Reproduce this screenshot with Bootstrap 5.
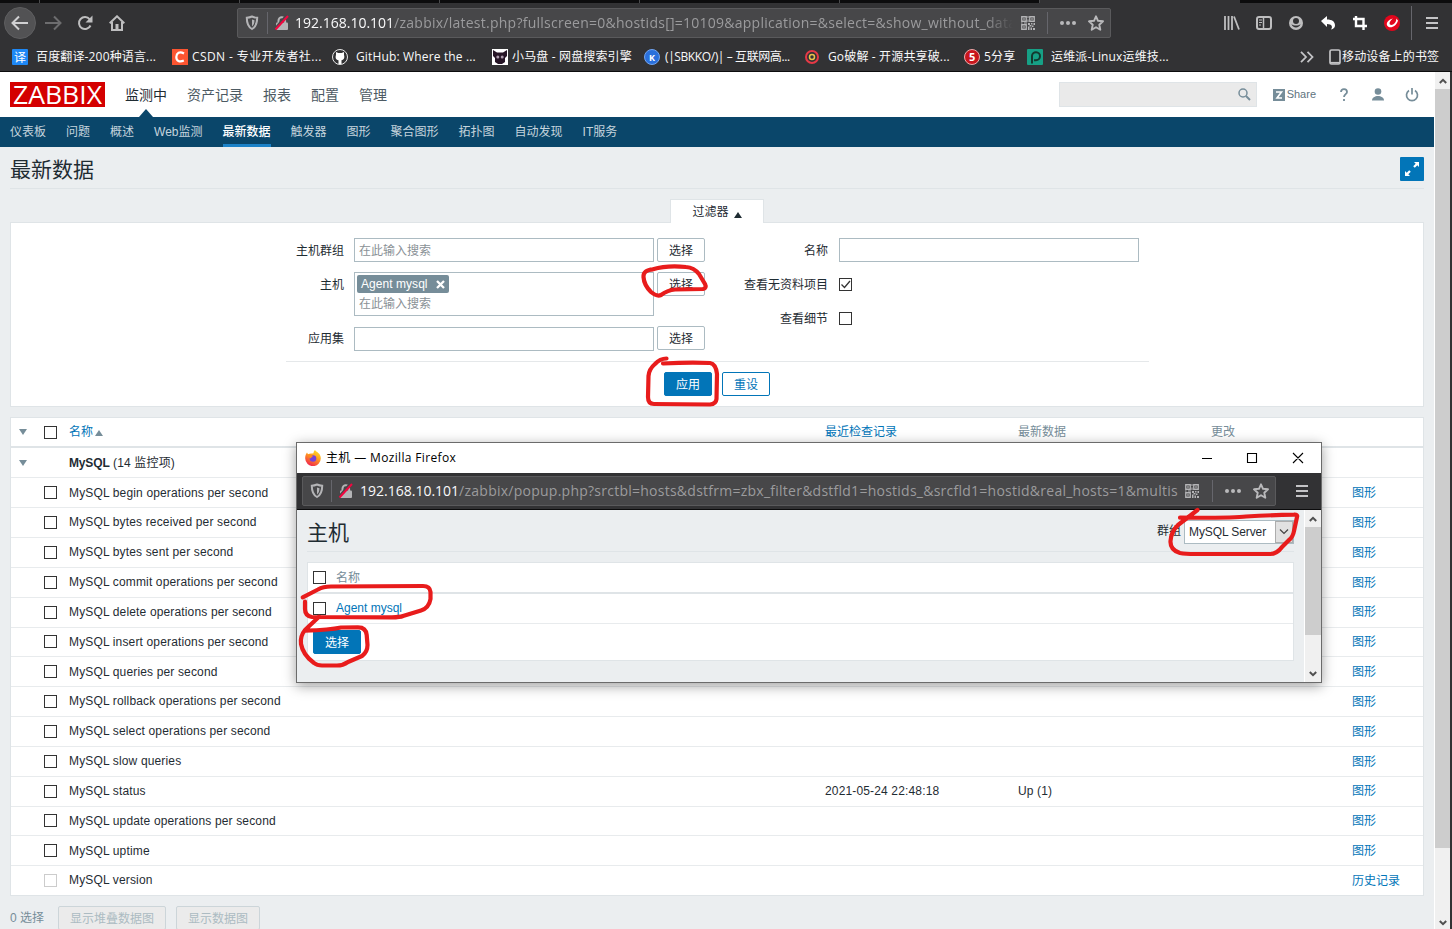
<!DOCTYPE html>
<html lang="zh-CN">
<head>
<meta charset="utf-8">
<title>最新数据</title>
<link rel="stylesheet" href="https://cdn.jsdelivr.net/npm/bootstrap@5.3.0/dist/css/bootstrap.min.css">
<style>
html,body{height:100%;overflow:hidden}
body{font-family:"Liberation Sans","Noto Sans CJK SC",sans-serif;font-size:12px;line-height:1.2;color:#1f2c33;background:#ebeef0}
a{color:#0275b8;text-decoration:none}
svg{display:block;flex:none}
.ui-font{font-family:"Open Sans","Noto Sans CJK SC",sans-serif}
.desk{width:1452px;height:929px;overflow:hidden}
/* browser chrome */
.tabstrip{height:3px;background:#0c0c0d}
.tabstrip span{width:200px;border-right:1px solid #4a4a4c;flex:none}
.tabstrip span:first-child{width:40px}
.tabstrip .on{background:#323234;border:0}
.chrome{height:69px;background:#323234;border-bottom:1px solid #0c0c0d}
.navrow{height:40px;color:#bebebf}
.backbtn{width:32px;height:32px;border-radius:50%;background:#525254;border:1px solid #5e5e60;margin-left:4px}
.field{height:30px;background:#474749;border:1px solid #5a5a5c;border-radius:2px}
.field.main-url{width:874px;margin-left:112px}
.vline{width:1px;height:22px;background:#66666c;flex:none}
.url{font-size:14px;color:#9b9b9d;white-space:nowrap;line-height:20px;letter-spacing:.25px;padding-bottom:1px}
.url b{font-weight:400;color:#f9f9fa;letter-spacing:0}
.main-url .url{width:718px;margin-left:5px;-webkit-mask-image:linear-gradient(90deg,#000 96%,transparent)}
.marks{height:28px;color:#f9f9fa;font-size:12px;padding-left:12px;letter-spacing:.15px}
.marks>span{display:flex;align-items:center;white-space:nowrap;flex:none}
.marks>span>svg{margin-right:4px}
.marks>span:nth-child(1){width:160px}.marks>span:nth-child(2){width:160px;letter-spacing:.4px}
.marks>span:nth-child(3){width:160px;letter-spacing:.15px}.marks>span:nth-child(4){width:152px}
.marks>span:nth-child(5){width:160px}.marks>span:nth-child(6){width:160px}
.marks>span:nth-child(7){width:63px}.marks>span:nth-child(8){width:273px}
.marks .wide>svg{margin-right:8px}
.marks .k{letter-spacing:-.4px}
.marks .k>svg{margin-right:5px}
.edge{width:2px;background:#323234}
.sbar{width:16px;background:#f0f0f0;border-left:1px solid #fff}
.thumb{background:#cdcdcd}
/* zabbix */
.page{width:1434px}
.top{height:45px;background:#fff;padding:0 10px}
.logo{width:95px;height:25px;background:#d40000;font-family:"Open Sans",sans-serif}
.logo svg{overflow:visible}
.menu{gap:20px;font-size:14px;margin-left:20px;height:45px}
.menu a{color:#4d5a63;line-height:46px}
.menu .on{color:#1f2c33;position:relative}
.menu .on::after{content:"";position:absolute;left:14px;bottom:0;border:7px solid transparent;border-top:0;border-bottom:8px solid #0a466a}
.searchbox{width:198px;height:25px;background:#eaeaea;border:1px solid #dfe4e7;padding-right:5px}
.sub{height:30px;background:#0a466a;gap:20px;padding:0 10px}
.sub a{color:#c5d4dd;line-height:31px;height:30px}
.sub .on{color:#fff;font-weight:500;border-bottom:3px solid #1c82c8}
.title{height:42px;border-bottom:1px solid #dfe4e7;margin:0 10px;padding-top:3px}
h1{font-size:21px;font-weight:400;margin:0;padding-top:2px;line-height:1.2}
.full{width:24px;height:24px;background:#0275b8;border-radius:1px}
.ftab{width:94px;height:24px;background:#fff;border:1px solid #dfe4e7;border-bottom:0;margin:10px auto -1px 670px;position:relative;padding-top:2px}
.panel{background:#fff;border:1px solid #dfe4e7;margin:0 10px}
.filter{height:185px}
.fgrid{display:grid;grid-template-columns:343px 300px 3px 48px 123px 11px 300px;padding-top:15px}
.lab{text-align:right;padding-right:10px;line-height:26px;height:24px}
.inp{border:1px solid #acbbc2;background:#fff;height:24px;line-height:24px;padding-left:4px;color:#8a9196}
.zbtn{height:24px;line-height:23px;border:1px solid #acbbc2;border-radius:2px;background:#fff;text-align:center;width:48px;color:#1f2c33;padding:1px 0 0;font-size:12px;flex:none}
.zbtn.pri{background:#0275b8;border-color:#0275b8;color:#fff}
.zbtn.alt{border-color:#0275b8;color:#0275b8}
.tag{background:#768d99;color:#fff;height:18px;line-height:18px;width:92px;border-radius:2px;padding:0 4px;letter-spacing:.05px}
.hint{padding-left:2px;line-height:22px}
.cb{width:13px;height:13px;border:1px solid #333;background:#fff;display:block;flex:none}
.cb.off{border-color:#ccc}
.fline{border-top:1px solid #e5e8ea;margin:0 274px 0 275px}
.zrow{display:grid;grid-template-columns:33px 25px 756px 193px 193px 141px 1fr;align-items:center;height:29.83px;border-bottom:1px solid #e8ebed}
.zrow:last-child{border-bottom:0}
.zrow.hd{height:30px;border-bottom:2px solid #dfe4e7;color:#768d99}
.zrow.grp{height:30.4px}
.zrow .nm{letter-spacing:.15px}
.zrow .nm b{letter-spacing:-.15px}
.zrow a{padding-top:1px}
.zrow.hd>span:not(.cb):not(.tri),.zrow.grp .nm{padding-top:1px}
.tri{width:0;height:0;border:4px solid transparent;margin-left:8px;border-bottom:0;border-top:6px solid #768d99}
.up{display:inline-block;border:4px solid transparent;border-top:0;border-bottom:6px solid #768d99}
.zbtn.dis{background:#ebebeb;border-color:#ccd5d9;color:#acbbc2}
/* popup */
.popup{position:absolute;left:296px;top:442px;width:1026px;height:241px;border:1px solid #6b6b6b;background:#ebeef0;box-shadow:0 3px 12px rgba(0,0,0,.38)}
.ptitle{height:30px;background:#fff;color:#000;font-size:12px;letter-spacing:.35px}
.pnav{height:37px;background:#323234;border-bottom:1px solid #0c0c0d;color:#bebebf;padding:0 13px 0 5px}
.pnav .field{width:974px}
.pnav .url{width:819px;margin-left:6px}
.pbody{height:172px}
.pbody .sbar{width:17px}
.phead{height:42px;border-bottom:1px solid #dfe4e7;padding-top:2px}
.sel{width:110px;height:24px;border:1px solid #acbbc2;background:#fff;line-height:22px;padding-left:4px;letter-spacing:-.1px}
.sel i{width:18px;height:22px;background:#e1e1e1;border:1px solid #adadad}
.prow{display:flex;align-items:center;border-bottom:1px solid #e8ebed;padding-left:5px;gap:10px}
.ink{position:absolute;left:0;top:0;pointer-events:none}
</style>
</head>
<body>
<svg width="0" height="0" class="position-absolute">
<defs>
<symbol id="shield" viewBox="0 0 14 16"><path d="M7 1.500c2 .9 3.600 1.200 5.200 1.200 0 5-.7 8.800-5.200 11.300C2.500 11.500 1.800 7.700 1.800 2.700 3.400 2.700 5 2.400 7 1.500z" fill="none" stroke="#b4b4b6" stroke-width="2"/><path d="M7 4.500v7c1.800-1.500 2.400-3.500 2.500-6.300z" fill="#b4b4b6"/></symbol>
<symbol id="lock" viewBox="0 0 16 16"><path d="M4.500 8V5.500a3.300 3.300 0 0 1 6.600 0V8" fill="none" stroke="#b4b4b6" stroke-width="2"/><rect x="2" y="7.500" width="12" height="7.500" rx="1" fill="#b4b4b6"/><path d="M1 13.500L12.500 0" stroke="#474749" stroke-width="2"/><path d="M1.500 14.500L14 1" stroke="#f2063f" stroke-width="2"/></symbol>
<symbol id="qr" viewBox="0 0 14 14"><path d="M.75.75h4.500v4.500H.75zM8.750.75h4.500v4.500h-4.500zM.75 8.750h4.500v4.500H.75z" fill="none" stroke="#b4b4b6" stroke-width="1.300"/><path d="M2.300 2.300h1.400v1.400H2.300zM10.300 2.300h1.400v1.400h-1.400zM2.300 10.300h1.400v1.400H2.300zM7 7h2v2H7zM10 7h1.500v1.500H10zM12.500 7H14v2h-1.500zM8.500 9h2v1.500h-2zM11 9.500h1.500V11H11zM7 10.500h1.500V14H7zM9.500 11.500H11V14H9.500zM12 12h2v2h-2zM0 6.500h1.500v1H0zM3 6.500h3v1H3zM6.500 0h1v2h-1zM6.500 3.500h1V6h-1z" fill="#b4b4b6"/></symbol>
<symbol id="dots" viewBox="0 0 18 4"><circle cx="3" cy="2" r="2"/><circle cx="9" cy="2" r="2"/><circle cx="15" cy="2" r="2"/></symbol>
<symbol id="star" viewBox="0 0 16 16"><path d="M8 1.300l2 4.500 5 .5-3.700 3.400 1 5L8 12.200l-4.300 2.500 1-5L1 6.300l5-.5z" fill="none" stroke="#b9b9bb" stroke-width="1.900" stroke-linejoin="round"/></symbol>
<symbol id="burger" viewBox="0 0 12 12"><path d="M0 1h12M0 6h12M0 11h12" stroke="#c4c4c6" stroke-width="2"/></symbol>
<symbol id="chev" viewBox="0 0 8 6"><path d="M.8 5L4 1.800 7.200 5" fill="none" stroke="#505050" stroke-width="2"/></symbol>
</defs>
</svg>
<div class="desk position-relative">
<div class="tabstrip d-flex"><span></span><span></span><span></span><span></span><span></span><span></span><span class="on"></span></div>
<div class="chrome ui-font">
 <div class="navrow d-flex align-items-center">
  <div class="backbtn d-flex align-items-center justify-content-center"><svg width="18" height="16" viewBox="0 0 18 16"><path d="M17 8H2M8 1.500L1.500 8 8 14.500" fill="none" stroke="#d0d0d2" stroke-width="2"/></svg></div>
  <svg class="ms-2 me-3" width="18" height="16" viewBox="0 0 18 16"><path d="M1 8h15M10 1.500L16.500 8 10 14.500" fill="none" stroke="#6d6d6f" stroke-width="2"/></svg>
  <svg style="margin-left:-1px" width="16" height="16" viewBox="0 0 16 16"><path d="M13.500 10.500a6 6 0 1 1-.8-6.200" fill="none" stroke="#bebebf" stroke-width="2"/><path d="M15.500.5v7h-7z" fill="#bebebf"/></svg>
  <svg class="ms-3" width="16" height="16" viewBox="0 0 16 16"><path d="M.7 8.300L8 1.300l7.300 7" fill="none" stroke="#bebebf" stroke-width="2"/><path d="M3 7v8h10V7" fill="none" stroke="#bebebf" stroke-width="2"/><path d="M6.500 9h3v6h-3z" fill="#bebebf"/></svg>
  <div class="field main-url d-flex align-items-center">
   <svg width="14" height="16" style="margin-left:7px"><use href="#shield"/></svg><span class="vline" style="margin:0 7px 0 8px"></span>
   <svg width="16" height="16" style="margin-left:-1px"><use href="#lock"/></svg>
   <div class="url"><b>192.168.10.101</b>/zabbix/latest.php?fullscreen=0&amp;hostids[]=10109&amp;application=&amp;select=&amp;show_without_data</div>
   <svg width="14" height="14" class="ms-2"><use href="#qr"/></svg><span class="vline ms-auto"></span>
   <svg width="18" height="4" fill="#b9b9bb" style="margin:0 11px"><use href="#dots"/></svg>
   <svg width="16" height="16" style="margin-right:6px"><use href="#star"/></svg>
  </div>
  <div class="ms-auto d-flex align-items-center gap-3 pe-2">
   <svg width="16" height="14" viewBox="0 0 16 14"><path d="M1 0v14M4.500 0v14M8 0v14M10 .5l5 13" stroke="#bebebf" stroke-width="1.800" fill="none"/></svg>
   <svg width="16" height="14" viewBox="0 0 16 14"><rect x="1" y="1" width="14" height="12" rx="2" fill="none" stroke="#bebebf" stroke-width="2"/><path d="M7.500 1v12" stroke="#bebebf" stroke-width="1.500"/><path d="M3 4h3M3 6.500h3M3 9h2" stroke="#bebebf"/></svg>
   <svg width="16" height="16" viewBox="0 0 16 16"><circle cx="8" cy="8" r="7" fill="#bebebf"/><circle cx="8" cy="6" r="3" fill="#323234"/><path d="M3.500 9c1 4.500 8 4.500 9 0-2 2-7 2-9 0z" fill="#323234"/></svg>
   <svg width="16" height="16" viewBox="0 0 16 16"><path d="M1 6l6-5v3.500c5 0 8 2 8 6 0 2-1.500 3.500-4 4 2-2.500 1-5.500-4-5.500v3z" fill="#fff"/></svg>
   <svg width="16" height="16" viewBox="0 0 16 16"><path d="M4 1v10h11M1 4h10.500v11" fill="none" stroke="#fff" stroke-width="2.400"/></svg>
   <svg width="16" height="16" viewBox="0 0 16 16"><circle cx="8" cy="8" r="8" fill="#e2061c"/><path d="M9 3.500C4 4.500 1.500 8.500 3.500 11c2.500 3 9 .5 10.500-5.500l-1.800-2c.6 4-3.200 7-5.700 6.300C4.500 9 6 5.500 9 3.500z" fill="#fff"/></svg>
   <span class="vline" style="height:34px;margin-left:-5px"></span>
   <svg width="12" height="12" style="margin:0 6px 0 -2px"><use href="#burger"/></svg>
  </div>
 </div>
 <div class="marks d-flex align-items-center">
  <span class="wide"><svg width="16" height="16"><rect width="16" height="16" rx="1" fill="#1e88f5"/><text x="2" y="12.500" font-size="12" fill="#fff">译</text></svg>百度翻译-200种语言...</span>
  <span><svg width="16" height="16"><rect width="16" height="16" fill="#fc5531"/><path d="M12 4.500C7.500 2 4.500 4 4.300 8c0 4 3.200 5.500 7.500 3.600" fill="none" stroke="#fff" stroke-width="2.200"/></svg>CSDN - 专业开发者社...</span>
  <span class="wide"><svg width="16" height="16"><circle cx="8" cy="8" r="7.500" fill="#323234" stroke="#e8e8e8"/><path d="M4 3l2.300 1h3.400L12 3v3c1 3-.5 5-2.500 5.200V15h-3v-3.800C4.200 11 3 9 4 6z" fill="#fff"/></svg>GitHub: Where the ...</span>
  <span><svg width="16" height="16"><rect width="16" height="16" fill="#fff"/><path d="M1 1l4 2.500h6L15 1v6l-2 2v4l-3 2H6l-3-2V9L1 7z" fill="#261526"/><circle cx="5.800" cy="8" r="1.500" fill="#ad9cad"/><circle cx="10.200" cy="8" r="1.500" fill="#ad9cad"/></svg>小马盘 - 网盘搜索引擎</span>
  <span class="wide k"><svg width="16" height="16"><circle cx="8" cy="8" r="7.500" fill="#2a70dc" stroke="#72a4ef"/><text x="5" y="11.500" font-size="9" font-weight="700" fill="#fff">K</text></svg>(|SBKKO/)| – 互联网高...</span>
  <span class="wide"><svg width="16" height="16"><circle cx="8" cy="8" r="6" fill="#323234" stroke="#e63946" stroke-width="2"/><circle cx="8" cy="8" r="2.500" fill="none" stroke="#eac04b" stroke-width="1.500"/></svg>Go破解 - 开源共享破...</span>
  <span><svg width="16" height="16"><circle cx="8" cy="8" r="7.500" fill="#c8161d" stroke="#eaa"/><text x="5" y="12" font-size="11" font-weight="700" fill="#fff">5</text></svg>5分享</span>
  <span class="wide"><svg width="16" height="16"><rect width="16" height="16" rx="1" fill="#16a085"/><path d="M5 14.500V7a4 4 0 1 1 4 4.200H7" fill="none" stroke="#13392f" stroke-width="2"/></svg>运维派-Linux运维技...</span>
  <svg width="14" height="12" viewBox="0 0 14 12"><path d="M1 .8L6 6l-5 5.200M7.500.8L12.500 6l-5 5.200" fill="none" stroke="#c4c4c6" stroke-width="1.800"/></svg>
  <svg style="margin:0 1px 0 15px" width="12" height="16" viewBox="0 0 12 16"><rect x="1" y="1" width="10" height="14" rx="1.500" fill="none" stroke="#c4c4c6" stroke-width="1.700"/><path d="M1 13.700h10" stroke="#c4c4c6" stroke-width="1.600"/></svg>移动设备上的书签
 </div>
</div>
<div class="d-flex" style="height:857px">
 <main class="page">
  <div class="top d-flex align-items-center">
   <div class="logo"><svg width="95" height="25"><text x="3" y="21.500" font-size="25" textLength="89" lengthAdjust="spacingAndGlyphs" fill="#fff">ZABBIX</text></svg></div>
   <nav class="menu d-flex"><a href="#" class="on">监测中</a><a href="#">资产记录</a><a href="#">报表</a><a href="#">配置</a><a href="#">管理</a></nav>
   <div class="searchbox ms-auto d-flex align-items-center justify-content-end"><svg width="13" height="13"><circle cx="5" cy="5" r="4" fill="none" stroke="#768d99" stroke-width="1.500"/><path d="M8 8l4 4" stroke="#768d99" stroke-width="2"/></svg></div>
   <a href="#" class="d-flex align-items-center ms-3" style="color:#5f7480"><svg width="12" height="12" class="me-1"><rect width="12" height="12" fill="#768d99"/><path d="M3 3h5.500L4 9h5" fill="none" stroke="#fff" stroke-width="1.600"/></svg><span style="font-size:11px;margin-left:-2px">Share</span></a>
   <svg width="10" height="14" style="margin-left:23px"><path d="M2 4c.3-4 6-3.500 6 0C8 6 5 6.500 5 9M5 11v2" fill="none" stroke="#768d99" stroke-width="1.800"/></svg>
   <svg width="12" height="13" style="margin-left:23px"><circle cx="6" cy="3.500" r="3.300" fill="#768d99"/><path d="M0 12.500c0-3 3-4.500 6-4.500s6 1.500 6 4.500z" fill="#768d99"/></svg>
   <svg width="14" height="14" style="margin-left:21px;margin-right:5px"><path d="M4 2.500a5.500 5.500 0 1 0 6 0M7 0v6.500" fill="none" stroke="#768d99" stroke-width="1.700"/></svg>
  </div>
  <nav class="sub d-flex"><a href="#">仪表板</a><a href="#">问题</a><a href="#">概述</a><a href="#">Web监测</a><a href="#" class="on">最新数据</a><a href="#">触发器</a><a href="#">图形</a><a href="#">聚合图形</a><a href="#">拓扑图</a><a href="#">自动发现</a><a href="#">IT服务</a></nav>
  <div class="title d-flex align-items-center justify-content-between"><h1>最新数据</h1><div class="full d-flex align-items-center justify-content-center"><svg width="14" height="14"><path d="M9 0h5v5l-1.700-1.700L9.800 5.800 8.200 4.200l2.500-2.500zM0 9l1.700 1.700 2.500-2.500 1.600 1.600-2.500 2.500L5 14H0z" fill="#fff"/></svg></div></div>
  <div class="ftab d-flex align-items-center justify-content-center">过滤器<span class="up mt-1" style="border-bottom-color:#1f2c33;margin-left:5px"></span></div>
  <section class="panel filter">
   <div class="fgrid">
    <div class="lab">主机群组</div><div class="inp">在此输入搜索</div><i></i><button class="zbtn">选择</button><div class="lab pe-0">名称</div><i></i><div class="inp"></div>
   </div>
   <div class="fgrid" style="padding-top:10px;height:54px">
    <div class="lab">主机</div><div class="inp" style="height:44px;padding:2px"><div class="tag d-flex align-items-center justify-content-between">Agent mysql<svg width="9" height="9"><path d="M1 1l7 7M8 1L1 8" stroke="#fff" stroke-width="2.300"/></svg></div><div class="hint">在此输入搜索</div></div><i></i><button class="zbtn">选择</button>
    <div><div class="lab pe-0">查看无资料项目</div><div class="lab pe-0" style="margin-top:10px">查看细节</div></div><i></i>
    <div><span class="cb" style="margin-top:6px"><svg width="11" height="11"><path d="M1.500 5.500L4.500 8.500 10 2" fill="none" stroke="#333" stroke-width="1.300"/></svg></span><span class="cb" style="margin-top:21px"></span></div>
   </div>
   <div class="fgrid" style="padding-top:10px"><div class="lab">应用集</div><div class="inp" style="margin-top:1px"></div><i></i><button class="zbtn">选择</button></div>
   <div class="fline" style="margin-top:10px"></div>
   <div class="d-flex" style="gap:10px;padding:10px 0 0 653px"><button class="zbtn pri">应用</button><button class="zbtn alt">重设</button></div>
  </section>
  <section class="panel" style="margin-top:10px">
   <div class="zrow hd"><span class="tri"></span><span class="cb"></span><span><a href="#">名称</a> <span class="up" style="margin-left:-1px"></span></span><a href="#">最近检查记录</a><span>最新数据</span><span>更改</span><span></span></div>
   <div class="zrow grp"><span class="tri"></span><i></i><span class="nm"><b>MySQL</b> (14 监控项)</span></div>
   <div class="zrow"><i></i><span class="cb"></span><span class="nm">MySQL begin operations per second</span><i></i><i></i><i></i><a href="#">图形</a></div>
   <div class="zrow"><i></i><span class="cb"></span><span class="nm">MySQL bytes received per second</span><i></i><i></i><i></i><a href="#">图形</a></div>
   <div class="zrow"><i></i><span class="cb"></span><span class="nm">MySQL bytes sent per second</span><i></i><i></i><i></i><a href="#">图形</a></div>
   <div class="zrow"><i></i><span class="cb"></span><span class="nm">MySQL commit operations per second</span><i></i><i></i><i></i><a href="#">图形</a></div>
   <div class="zrow"><i></i><span class="cb"></span><span class="nm">MySQL delete operations per second</span><i></i><i></i><i></i><a href="#">图形</a></div>
   <div class="zrow"><i></i><span class="cb"></span><span class="nm">MySQL insert operations per second</span><i></i><i></i><i></i><a href="#">图形</a></div>
   <div class="zrow"><i></i><span class="cb"></span><span class="nm">MySQL queries per second</span><i></i><i></i><i></i><a href="#">图形</a></div>
   <div class="zrow"><i></i><span class="cb"></span><span class="nm">MySQL rollback operations per second</span><i></i><i></i><i></i><a href="#">图形</a></div>
   <div class="zrow"><i></i><span class="cb"></span><span class="nm">MySQL select operations per second</span><i></i><i></i><i></i><a href="#">图形</a></div>
   <div class="zrow"><i></i><span class="cb"></span><span class="nm">MySQL slow queries</span><i></i><i></i><i></i><a href="#">图形</a></div>
   <div class="zrow"><i></i><span class="cb"></span><span class="nm">MySQL status</span><span class="nm">2021-05-24 22:48:18</span><span class="nm">Up (1)</span><i></i><a href="#">图形</a></div>
   <div class="zrow"><i></i><span class="cb"></span><span class="nm">MySQL update operations per second</span><i></i><i></i><i></i><a href="#">图形</a></div>
   <div class="zrow"><i></i><span class="cb"></span><span class="nm">MySQL uptime</span><i></i><i></i><i></i><a href="#">图形</a></div>
   <div class="zrow" style="height:29px"><i></i><span class="cb off"></span><span class="nm">MySQL version</span><i></i><i></i><i></i><a href="#">历史记录</a></div>
  </section>
  <div class="d-flex align-items-center" style="padding:10px 10px 0;gap:10px;color:#768d99"><span style="width:38px;padding-top:1px">0 选择</span><button class="zbtn dis" style="width:108px">显示堆叠数据图</button><button class="zbtn dis" style="width:84px">显示数据图</button></div>
 </main>
 <div class="sbar d-flex flex-column align-items-center"><svg width="8" height="6" style="margin:6px 0 5px"><use href="#chev"/></svg><div class="thumb w-100" style="height:759px"></div><svg width="8" height="6" style="margin-top:auto;margin-bottom:3px;transform:scaleY(-1)"><use href="#chev"/></svg></div>
 <div class="edge"></div>
</div>

<div class="popup">
 <div class="ptitle ui-font d-flex align-items-center">
  <svg width="16" height="16" viewBox="0 0 16 16" style="margin:0 5px 0 8px"><defs><linearGradient id="fx" x1=".8" y1="0" x2=".3" y2="1"><stop offset="0" stop-color="#ffe226"/><stop offset=".45" stop-color="#ff9a1f"/><stop offset="1" stop-color="#f0204f"/></linearGradient></defs><path d="M10 0c1 2 5.800 3 5.800 8.200A7.800 7.800 0 0 1 .2 8.500C.1 6 .8 4 2 2.500l1 1.800C5 3 7 4 8.500 3.200 8.500 2 9 1 10 0z" fill="url(#fx)"/><circle cx="8" cy="8.500" r="3.300" fill="#7542d8"/><path d="M3 5c2-1 4 0 5 1.200C6.500 6.800 6.500 8 5 8.500z" fill="#ff8a1c"/></svg>
  <span>主机 — Mozilla Firefox</span>
  <svg width="106" height="12" viewBox="0 0 106 12" class="ms-auto" style="margin-right:14px"><path d="M1 6.500h10M46.500 1.500h9v9h-9zM92 1l10 10M102 1L92 11" fill="none" stroke="#000" stroke-width="1.100"/></svg>
 </div>
 <div class="pnav ui-font d-flex align-items-center justify-content-between">
  <div class="field d-flex align-items-center">
   <svg width="14" height="16" style="margin-left:7px"><use href="#shield"/></svg><span class="vline" style="margin:0 6px 0 7px"></span>
   <svg width="16" height="16"><use href="#lock"/></svg>
   <div class="url"><b>192.168.10.101</b>/zabbix/popup.php?srctbl=hosts&amp;dstfrm=zbx_filter&amp;dstfld1=hostids_&amp;srcfld1=hostid&amp;real_hosts=1&amp;multis</div>
   <svg width="14" height="14" style="margin-left:6px"><use href="#qr"/></svg><span class="vline ms-auto"></span>
   <svg width="18" height="4" fill="#b9b9bb" style="margin:0 11px"><use href="#dots"/></svg>
   <svg width="16" height="16" style="margin-right:6px"><use href="#star"/></svg>
  </div>
  <svg width="12" height="12"><use href="#burger"/></svg>
 </div>
 <div class="pbody d-flex">
  <div class="flex-fill" style="padding:0 10px">
   <div class="phead d-flex align-items-center justify-content-between"><h1>主机</h1><div class="d-flex align-items-center">群组<div class="sel d-flex justify-content-between" style="margin-left:3px">MySQL Server<i class="d-flex align-items-center justify-content-center"><svg width="10" height="6"><path d="M1 .5l4 4 4-4" fill="none" stroke="#444" stroke-width="1.200"/></svg></i></div></div></div>
   <section class="panel" style="margin:10px 0 0;height:99px">
    <div class="prow" style="height:31px;border-bottom:2px solid #dfe4e7;color:#768d99"><span class="cb"></span><span style="padding-top:1px">名称</span></div>
    <div class="prow" style="height:30px"><span class="cb"></span><a href="#">Agent mysql</a></div>
    <div class="prow border-0" style="height:36px"><button class="zbtn pri">选择</button></div>
   </section>
  </div>
  <div class="sbar d-flex flex-column align-items-center"><svg width="8" height="6" style="margin:6px 0 5px"><use href="#chev"/></svg><div class="thumb w-100" style="height:108px"></div><svg width="8" height="6" style="margin-top:auto;margin-bottom:5px;transform:scaleY(-1)"><use href="#chev"/></svg></div>
 </div>
</div>

<svg class="ink" width="1452" height="929" viewBox="0 0 1452 929" fill="none" stroke="#e81c1c" stroke-width="4.200" stroke-linecap="round" stroke-linejoin="round">
 <path d="M653 269.300Q643 270 643.500 277Q644 285 651 292Q657 297 661 295Q668 290 675 289.500L703 289Q707 288 705 284L699 274Q694 267.500 686 267Q667 265 653 269.300"/>
 <path d="M666.500 358.500Q660 358.500 655 364Q649 369 648.500 376L648 397Q648 404 654 404L710 404.500Q716 404 716.500 399L717 374Q716 364 710 363Q690 362 663 363.500"/>
 <path d="M302.700 597.300L318 589.500Q323 586.500 331 586.500L423 586Q430 586 430.500 592V599Q429 608 421 610.500L403 616Q400 617.300 392 617.300L312 617Q305 616 305 609V601.700"/>
 <path d="M319 616.700L305 630Q300 636 301 644Q303 655 314 663Q317 665.500 322 665.500H337Q343 665.500 348 662L362 656Q367.500 652 367.500 645L366.700 635Q366 627.300 358 627.300L341 627.500Q330 630 305 630.700"/>
 <path d="M1197.500 510L1178 525Q1171 532 1170.500 541Q1170 550 1180 553Q1185 554 1195 554L1270 554Q1277 554 1282 547L1289 540Q1293 537 1294 531L1297 517Q1298 514.500 1294 514.700Q1270 515 1246 516.500Q1235 518 1180 517.700"/>
</svg>
</div>
<script src="https://cdn.jsdelivr.net/npm/bootstrap@5.3.0/dist/js/bootstrap.bundle.min.js"></script>
</body>
</html>
